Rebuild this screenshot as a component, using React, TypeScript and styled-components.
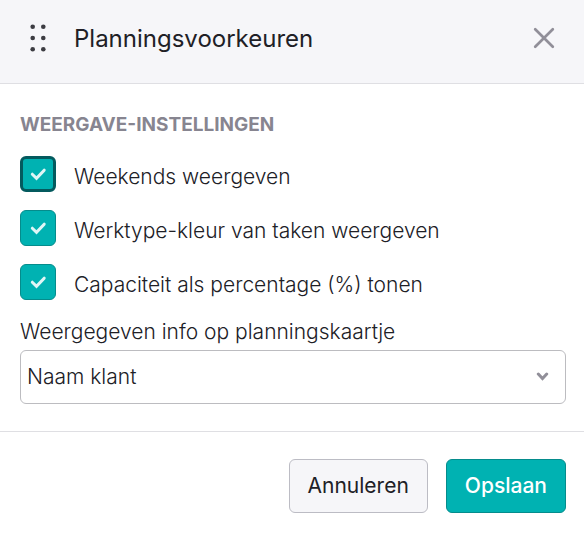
import React from "react";
import styled, { createGlobalStyle } from "styled-components";

const GlobalStyle = createGlobalStyle`
  *, *::before, *::after { box-sizing: border-box; }
  body { margin: 0; background: #fff; color: #202026; font-family: Inter, "Liberation Sans", sans-serif; font-size: 21px; line-height: 28px; }
  button, input, select { font: inherit; color: inherit; }
`;

const Dialog = styled.form`
  background: #fff;
`;

const Header = styled.header`
  display: flex;
  align-items: center;
  height: 84px;
  padding: 0 28px 8px;
  background: #f6f6f9;
  border-bottom: 1px solid #dfdfe3;
`;

const Title = styled.h1`
  flex: 1;
  margin: 0 0 0 26px;
  padding-top: 2px;
  font-size: 24px;
  line-height: 32px;
  font-weight: 400;
`;

const IconButton = styled.button`
  display: flex;
  padding: 0;
  border: 0;
  background: none;
  cursor: pointer;
`;

const Body = styled.div`
  padding: 28px 18px 27px 20px;
`;

const Settings = styled.fieldset`
  display: flex;
  flex-direction: column;
  gap: 18px;
  margin: 0;
  padding: 0;
  border: 0;
`;

const Legend = styled.legend`
  margin-bottom: 18px;
  padding: 0;
  color: #878590;
  font-size: 19px;
  line-height: 26px;
  font-weight: 700;
`;

const CheckRow = styled.label`
  display: flex;
  align-items: center;
  gap: 18px;
  height: 36px;
  font-weight: 300;
`;

const CheckFrame = styled.span`
  display: grid;
  width: 36px;
  height: 36px;
  flex: none;
  > * { grid-area: 1 / 1; place-self: center; }
  svg { pointer-events: none; }
`;

const Checkbox = styled.input<{ $active?: boolean }>`
  appearance: none;
  width: 36px;
  height: 36px;
  margin: 0;
  border: ${(p) => (p.$active ? "3px solid #045a5e" : "1px solid #058c8c")};
  border-radius: 6px;
  background: #00b2b2;
`;

const CheckText = styled.span`
  padding-top: 6px;
`;

const FieldLabel = styled.label`
  display: block;
  margin: 18px 0 4px;
  font-weight: 300;
`;

const SelectFrame = styled.div`
  display: grid;
  align-items: center;
  > * { grid-area: 1 / 1; }
  svg { justify-self: end; margin-right: 16px; pointer-events: none; }
`;

const Select = styled.select`
  appearance: none;
  width: 100%;
  height: 54px;
  padding: 0 40px 0 6px;
  border: 1px solid #bcbcc0;
  border-radius: 6px;
  background: #fff;
  font-weight: 300;
`;

const Footer = styled.footer`
  display: flex;
  justify-content: flex-end;
  gap: 18px;
  padding: 27px 18px 22px;
  border-top: 1px solid #dfdfe3;
`;

const Button = styled.button<{ $primary?: boolean }>`
  height: 54px;
  padding: 0 18px;
  border: 1px solid ${(p) => (p.$primary ? "#058c8c" : "#bcbcc4")};
  border-radius: 6px;
  background: ${(p) => (p.$primary ? "#00b2b2" : "#f6f6f9")};
  color: ${(p) => (p.$primary ? "#fff" : "#202026")};
  font-weight: ${(p) => (p.$primary ? 500 : 400)};
  cursor: pointer;
`;

const options = ["Weekends weergeven", "Werktype-kleur van taken weergeven", "Capaciteit als percentage (%) tonen"];

export default function App() {
  return (
    <>
      <GlobalStyle />
      <Dialog aria-label="Planningsvoorkeuren">
        <Header>
          <IconButton type="button" aria-label="Verplaatsen">
            <svg width="20" height="28" viewBox="0 0 20 28" fill="#3c3c42">
              {[2.7, 14, 25.3].map((y) => (
                <React.Fragment key={y}>
                  <circle cx="4.7" cy={y} r="2.3" />
                  <circle cx="15.3" cy={y} r="2.3" />
                </React.Fragment>
              ))}
            </svg>
          </IconButton>
          <Title>Planningsvoorkeuren</Title>
          <IconButton type="button" aria-label="Sluiten">
            <svg width="24" height="24" viewBox="0 0 24 24" fill="none" stroke="#918f99" strokeWidth="2.7" strokeLinecap="round">
              <path d="M3.2 3.2 20.8 20.8M20.8 3.2 3.2 20.8" />
            </svg>
          </IconButton>
        </Header>
        <Body>
          <Settings>
            <Legend>WEERGAVE-INSTELLINGEN</Legend>
            {options.map((text, i) => (
              <CheckRow key={text}>
                <CheckFrame>
                  <Checkbox type="checkbox" defaultChecked $active={i === 0} />
                  <svg width="18" height="18" viewBox="0 0 18 18" fill="none" stroke="#e0f6f6" strokeWidth="3" strokeLinecap="round">
                    <path d="m3.3 9.2 4.2 4.2 7.7-8.2" />
                  </svg>
                </CheckFrame>
                <CheckText>{text}</CheckText>
              </CheckRow>
            ))}
          </Settings>
          <FieldLabel htmlFor="info">Weergegeven info op planningskaartje</FieldLabel>
          <SelectFrame>
            <Select id="info">
              <option>Naam klant</option>
            </Select>
            <svg width="14" height="10" viewBox="0 0 14 10" fill="none" stroke="#918f99" strokeWidth="3" strokeLinecap="round">
              <path d="m2.3 2 4.2 4.5 4.2-4.5" />
            </svg>
          </SelectFrame>
        </Body>
        <Footer>
          <Button type="button">Annuleren</Button>
          <Button type="button" $primary>Opslaan</Button>
        </Footer>
      </Dialog>
    </>
  );
}
